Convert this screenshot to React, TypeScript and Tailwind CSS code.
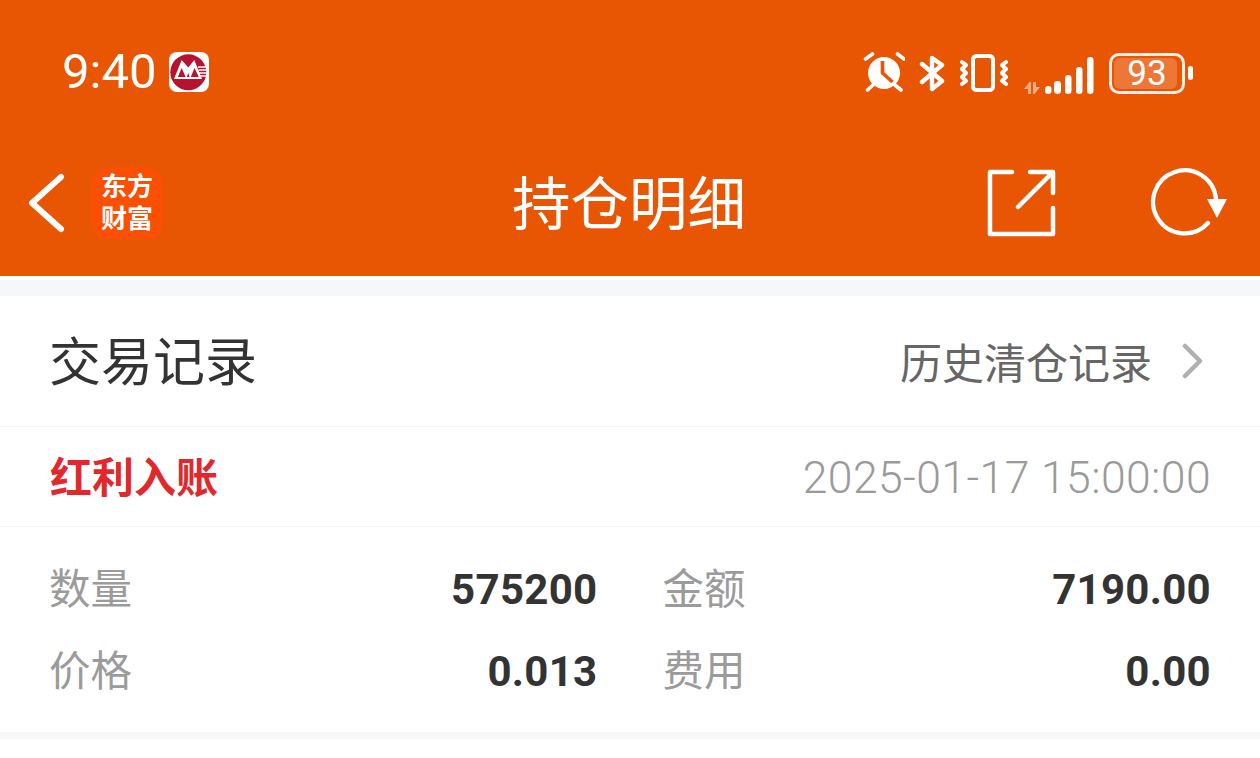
import React from "react";

const cjk = "font-['Noto_Sans_CJK_SC','Noto_Sans',sans-serif]";
const num = "font-['Roboto','Noto_Sans_CJK_SC',sans-serif]";

const Logo = () => (
  <div className="size-10 rounded-lg bg-white flex items-center justify-center">
    <svg viewBox="0 0 40 40" className="size-10">
      <circle cx="19.3" cy="20.3" r="18" fill="#b5132f" />
      <path d="M29 15h9M29.5 18h9M30 21h8M30 24h7.5" stroke="#fff" strokeWidth="1.3" />
      <path d="M5 27 L12.7 8 L19.3 15.5 L25.3 8 L33 27 Z" fill="#fff" />
      <path d="M12.7 16 L8.8 25 L16.6 25 Z" fill="#b5132f" />
      <path d="M25.5 16 L21.8 25 L29.8 25 Z" fill="#b5132f" />
      <path d="M19.2 21 L17.8 25 L20.6 25 Z" fill="#b5132f" />
    </svg>
  </div>
);

const StatusIcons = () => (
  <div className="flex items-center">
    {/* alarm */}
    <svg viewBox="0 0 42 42" className="w-[42px] h-[42px]">
      <circle cx="21" cy="21" r="16" fill="#fff" />
      <path d="M19.5 9 L19.5 21 L29.5 30" fill="none" stroke="#e85604" strokeWidth="3.6" />
      <path d="M2.5 7 L9.5 2 M34.5 2 L41 7 M4.5 38 L10 33 M32 33 L38 38" stroke="#fff" strokeWidth="3.6" strokeLinecap="round" />
    </svg>
    {/* bluetooth */}
    <svg viewBox="0 0 26 40" className="w-[26px] h-10 ml-[14px]" fill="none" stroke="#fff" strokeWidth="4.4" strokeLinecap="round" strokeLinejoin="round">
      <path d="M3 11 L23 28 L13 36 L13 5 L23 12 L3 29" />
    </svg>
    {/* vibrate */}
    <svg viewBox="0 0 48 38" className="w-12 h-[38px] ml-[15px]" fill="none" stroke="#fff" strokeWidth="4" strokeLinecap="round" strokeLinejoin="round">
      <rect x="13" y="2" width="20" height="34" rx="3.5" strokeWidth="4" />
      <path d="M2 8 L6 11 L2 15 L6 19 L2 23 L6 27 L2 30" />
      <path d="M46 8 L42 11 L46 15 L42 19 L46 23 L42 27 L46 30" />
    </svg>
    {/* signal */}
    <svg viewBox="0 0 72 42" className="w-[72px] h-[42px] ml-[14px]">
      <path d="M2 37 L7.5 30 L9 30 L9 42 L6 42 L6 37 Z M11 30 L14 30 L14 35 L18 35 L12.5 42 L11 42 Z" fill="#fff" opacity="0.5" />
      <rect x="23" y="34" width="6.5" height="8" rx="3.2" fill="#fff" />
      <rect x="32" y="29" width="7" height="13" rx="3.4" fill="#fff" />
      <rect x="43" y="23" width="6.5" height="19" rx="3.2" fill="#fff" />
      <rect x="54" y="15" width="6.5" height="27" rx="3.2" fill="#fff" />
      <rect x="65" y="5" width="6.5" height="37" rx="3.2" fill="#fff" />
    </svg>
    {/* battery */}
    <div className="flex items-center ml-[15px]">
      <div className="relative w-[76px] h-[41px] rounded-[10px] border-[3px] border-white/90 flex items-center justify-center overflow-hidden">
        <div className="absolute inset-[2px] right-[5px] rounded-[6px] bg-white/20" />
        <span className={`relative text-white text-[35px] leading-none ${num}`}>93</span>
      </div>
      <div className="w-[5px] h-[14px] rounded-full bg-white ml-[3px]" />
    </div>
  </div>
);

const Header = () => (
  <div className="bg-[#e85604] h-[276px] flex flex-col">
    <div className="h-[140px] flex items-start justify-between pl-[62px] pr-[67px] pt-[52px]">
      <div className="flex items-center gap-[13px]">
        <span className={`text-white text-[49px] leading-10 ${num}`}>9:40</span>
        <Logo />
      </div>
      <StatusIcons />
    </div>
    <div className="relative flex-1 flex items-start justify-center">
      <div className="absolute left-[28px] top-[27px] flex items-center gap-[25px]">
        <svg viewBox="0 0 38 62" className="w-[38px] h-[62px]" fill="none" stroke="#fff" strokeWidth="6" strokeLinecap="round" strokeLinejoin="round">
          <path d="M33 5 L4 31 L33 57" />
        </svg>
        <div className={`size-[72px] rounded-[18px] bg-[#fb4f04] flex flex-col items-center justify-center pb-1 text-white text-[26px] font-bold ${cjk}`}>
          <div className="h-[32px] leading-[32px]">东方</div>
          <div className="h-[32px] leading-[32px]">财富</div>
        </div>
      </div>
      <span className={`text-white text-[58.5px] leading-[72px] mt-[24px] -translate-x-px ${cjk}`}>持仓明细</span>
      <div className="absolute left-[985px] top-[27px] flex items-center gap-[94px]">
        <svg viewBox="0 0 72 72" className="size-[72px]" fill="none" stroke="#fff" strokeWidth="4.5" strokeLinecap="round" strokeLinejoin="round">
          <path d="M27 5 H5 V67 H68 V41" />
          <path d="M33 40 L66 7 M45 5 H68 V26" />
        </svg>
        <svg viewBox="0 0 78 72" className="w-[78px] h-[72px]">
          <path d="M57 56 A31.5 31.5 0 1 1 65 32" fill="none" stroke="#fff" strokeWidth="4.2" strokeLinecap="round" />
          <path d="M56 32 L76 32 L66 51 Z" fill="#fff" />
        </svg>
      </div>
    </div>
  </div>
);

const Cell = ({ label, value }: { label: string; value: string }) => (
  <div className="flex items-center justify-between h-[82px]">
    <span className={`text-[#9b9b9b] text-[41.5px] leading-none -translate-x-px -translate-y-[3px] ${cjk}`}>{label}</span>
    <span className={`text-[#333] text-[42px] leading-none font-bold tracking-[0.3px] translate-x-px ${num}`}>{value}</span>
  </div>
);

export default function App() {
  return (
    <div className="w-[1260px] h-[758px] bg-white overflow-hidden flex flex-col">
      <Header />
      <div className="h-1 bg-white" />
      <div className="h-4 bg-[#f6f7f9]" />
      <div className="h-[131px] flex items-center justify-between pl-[49px] pr-[56px] border-b border-[#f5f5f5]">
        <span className={`text-[#333] text-[52px] leading-none -translate-y-0.5 ${cjk}`}>交易记录</span>
        <div className="flex items-center gap-[30px]">
          <span className={`text-[#666] text-[42px] leading-none ${cjk}`}>历史清仓记录</span>
          <svg viewBox="0 0 22 36" className="w-[22px] h-9" fill="none" stroke="#b0b0b0" strokeWidth="4.5" strokeLinecap="round" strokeLinejoin="round">
            <path d="M3 3 L18 18 L3 33" />
          </svg>
        </div>
      </div>
      <div className="h-[100px] flex items-center justify-between px-[50px] border-b border-[#f5f5f5]">
        <span className={`text-[#e2272d] text-[42px] leading-none font-bold -translate-y-0.5 ${cjk}`}>红利入账</span>
        <span className={`text-[#9a9a9a] text-[44.5px] leading-none font-light tracking-[0.4px] translate-x-px translate-y-0.5 ${num}`}>2025-01-17 15:00:00</span>
      </div>
      <div className="grid grid-cols-2 content-start gap-x-[67px] px-[50px] pt-[22px] h-[205px]">
        <Cell label="数量" value="575200" />
        <Cell label="金额" value="7190.00" />
        <Cell label="价格" value="0.013" />
        <Cell label="费用" value="0.00" />
      </div>
      <div className="h-[7px] bg-[#f6f7f9]" />
    </div>
  );
}
